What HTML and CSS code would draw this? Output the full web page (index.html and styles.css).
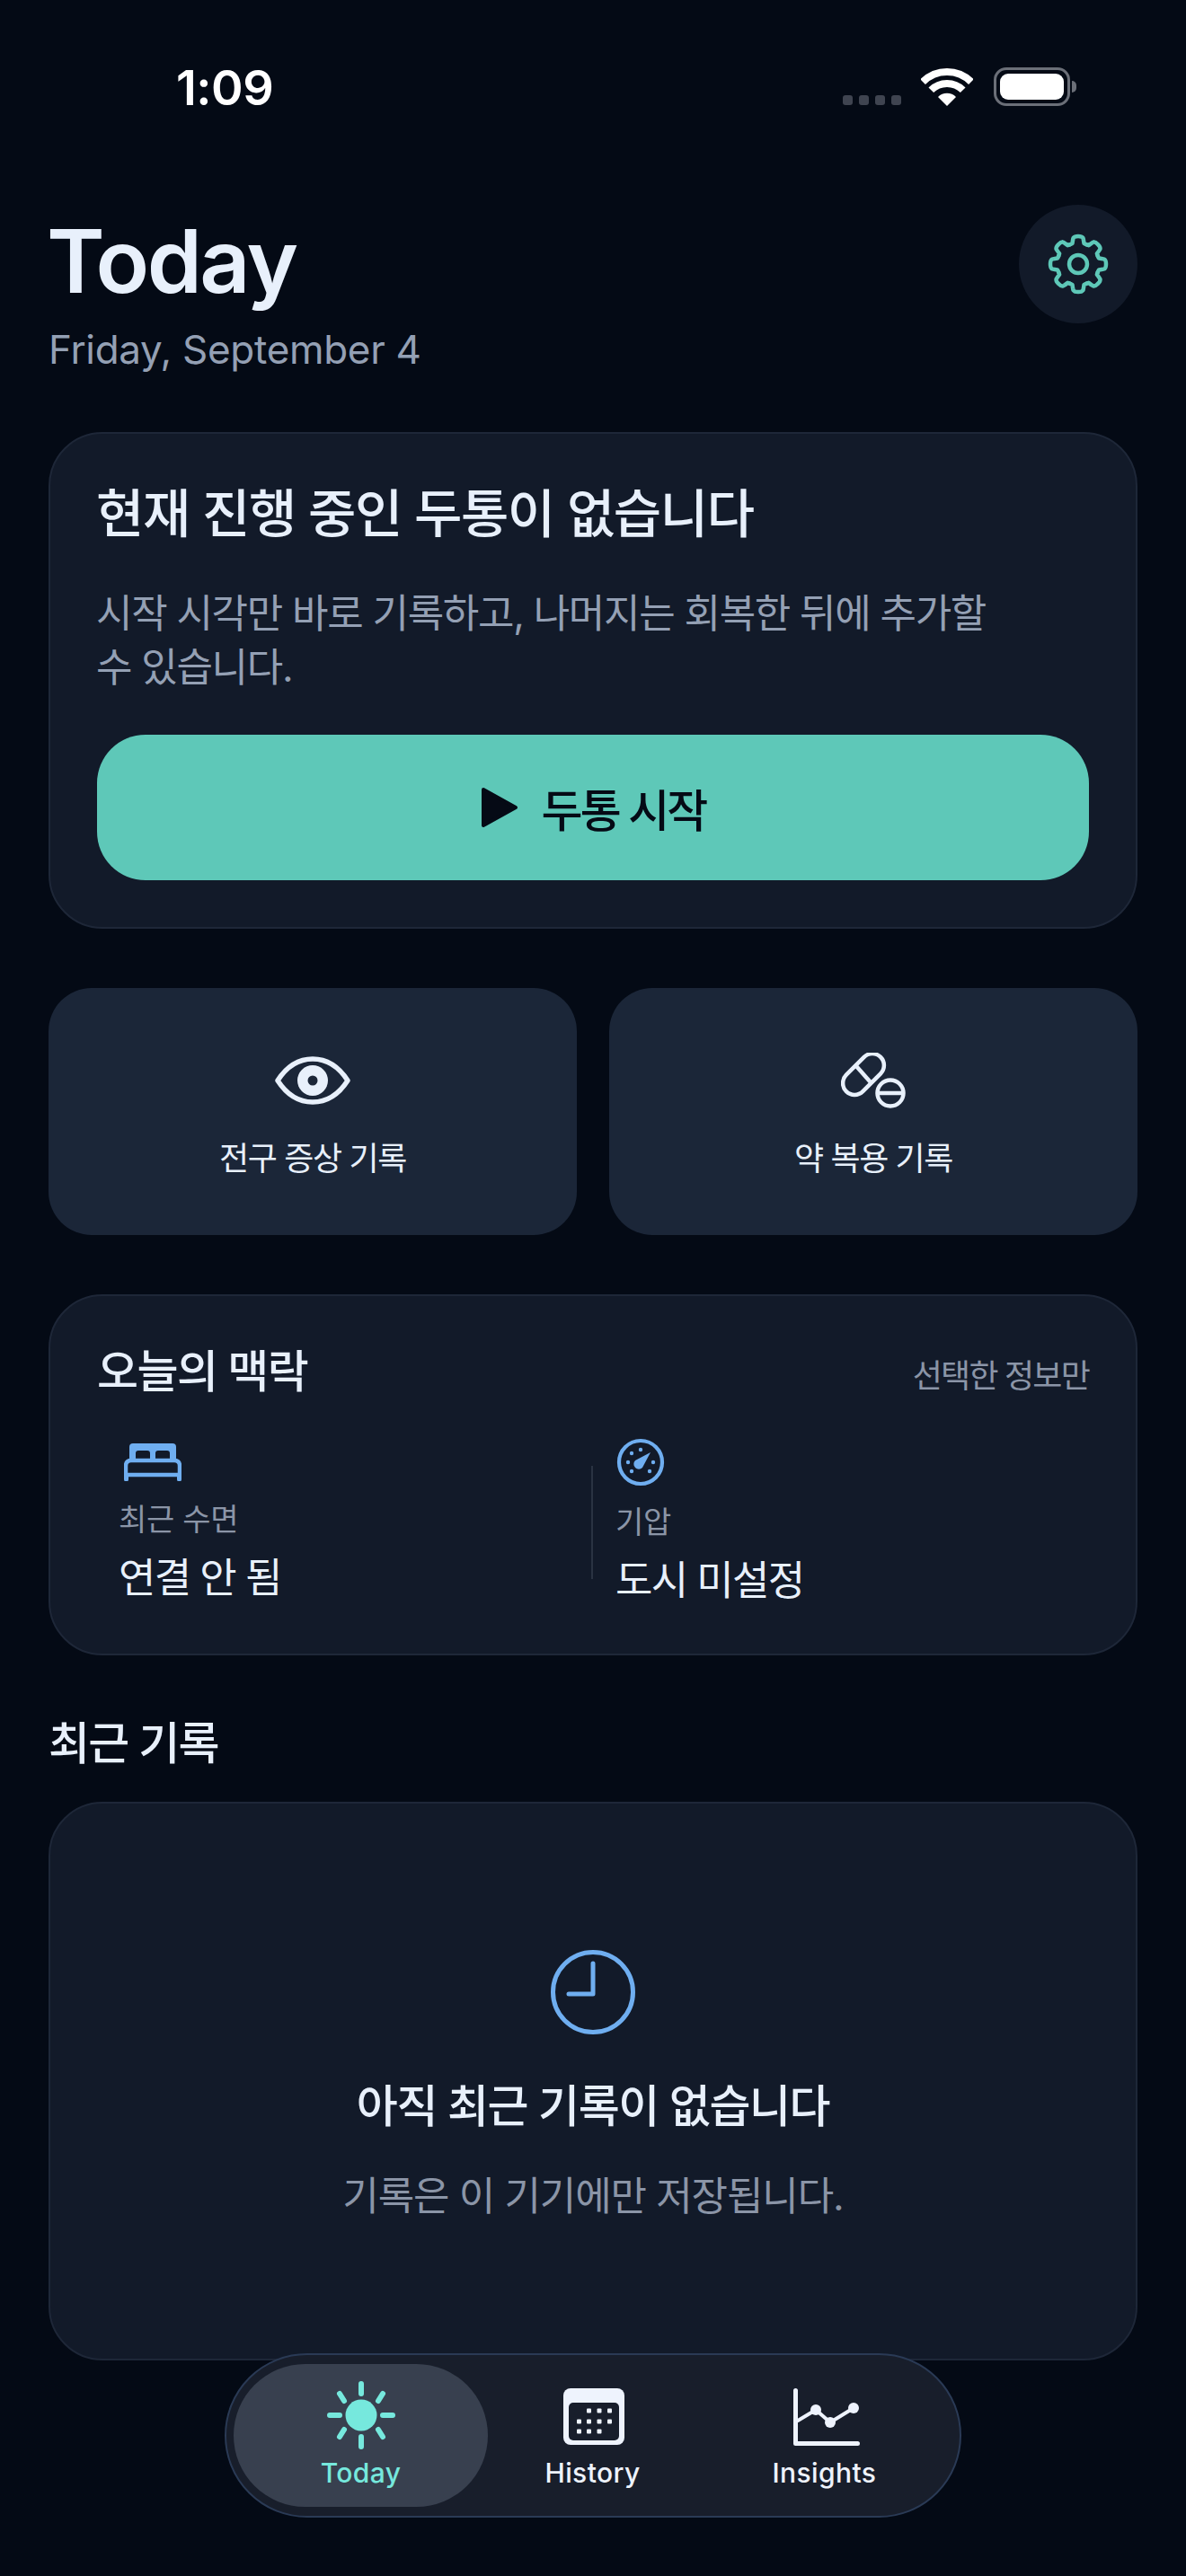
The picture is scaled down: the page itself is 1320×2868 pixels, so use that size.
FILE: index.html
```html
<!DOCTYPE html>
<html lang="ko">
<head>
<meta charset="utf-8">
<title>Today</title>
<link rel="stylesheet" href="styles.css">
</head>
<body>
<div class="screen">
  <div class="statusbar">
    <span class="time">1:09</span>
    <div class="status-icons">
      <div class="signal"><i></i><i></i><i></i><i></i></div>
      <svg class="wifi" viewBox="0 0 58 43"><path d="M2.100 16.100A38 38 0 0 1 55.900 16.100M11.300 25.300A25 25 0 0 1 46.700 25.300" fill="none" stroke="#fff" stroke-width="8"/><path d="M29 43L19 33A14 14 0 0 1 39 33Z" fill="#fff"/></svg>
      <div class="battery"><div class="battery-fill"></div></div>
      <div class="battery-nub"></div>
    </div>
  </div>

  <header class="header">
    <div>
      <h1 class="title">Today</h1>
      <p class="date">Friday, September 4</p>
    </div>
    <button class="gear-btn">
      <svg class="gear" viewBox="-36 -36 72 72" fill="none" stroke="#5EC8B8" stroke-width="4.500" stroke-linecap="round" stroke-linejoin="round">
        <defs><path id="tooth" d="M-9.200-21.700L-6.500-23Q-5.600-30-5-29.500Q-4-31 0-31Q4-31 5-29.500Q5.600-30 6.500-23L9.200-21.700"/></defs>
        <use href="#tooth"/><use href="#tooth" transform="rotate(45)"/><use href="#tooth" transform="rotate(90)"/><use href="#tooth" transform="rotate(135)"/><use href="#tooth" transform="rotate(180)"/><use href="#tooth" transform="rotate(225)"/><use href="#tooth" transform="rotate(270)"/><use href="#tooth" transform="rotate(315)"/>
        <circle r="10"/>
      </svg>
    </button>
  </header>

  <section class="card hero">
    <h2 class="hero-title">현재 진행 중인 두통이 없습니다</h2>
    <p class="hero-text">시작 시각만 바로 기록하고, 나머지는 회복한 뒤에 추가할 수 있습니다.</p>
    <button class="start-btn">
      <svg class="play" viewBox="0 0 42 46"><path d="M3 3L39 23L3 43Z" fill="#050A15" stroke="#050A15" stroke-width="4" stroke-linejoin="round"/></svg>
      <span>두통 시작</span>
    </button>
  </section>

  <div class="quick-row">
    <button class="quick">
      <svg class="quick-icon eye" viewBox="0 0 84 54"><path d="M3 27C14 10 27 3 42 3S70 10 81 27C70 44 57 51 42 51S14 44 3 27Z" fill="none" stroke="#E8F0FB" stroke-width="5.500" stroke-linejoin="round"/><circle cx="42" cy="27" r="17" fill="#E8F0FB"/><circle cx="42" cy="27" r="5.500" fill="#1B2638"/></svg>
      <span>전구 증상 기록</span>
    </button>
    <button class="quick">
      <svg class="quick-icon pill" viewBox="0 0 72 62"><g fill="none" stroke="#E8F0FB" stroke-width="4.500"><rect x="-13" y="-27" width="26" height="54" rx="13" transform="translate(25 24) rotate(45)"/><path d="M18 16L33 33" transform="translate(-0.500 -0.500)"/><circle cx="55" cy="45" r="14.500"/><path d="M41 45H69"/></g></svg>
      <span>약 복용 기록</span>
    </button>
  </div>

  <section class="card context">
    <div class="context-head">
      <h2 class="context-title">오늘의 맥락</h2>
      <span class="context-note">선택한 정보만</span>
    </div>
    <div class="context-grid">
      <div class="context-item">
        <svg class="bed" viewBox="0 0 64 42"><path d="M10 0H54Q58 0 58 4V22H6V4Q6 0 10 0Z" fill="#6FAEF0"/><path d="M13 18V11Q13 8 16 8H26Q29 8 29 11V18ZM35 18V11Q35 8 38 8H48Q51 8 51 11V18Z" fill="#121A29"/><path d="M8 19H56Q62 19 62 25V35H2V25Q2 19 8 19Z" fill="#121A29" stroke="#6FAEF0" stroke-width="4.500" stroke-linejoin="round"/><path d="M2.500 35V40M61.500 35V40" stroke="#6FAEF0" stroke-width="5" stroke-linecap="round"/></svg>
        <span class="context-label">최근 수면</span>
        <span class="context-value">연결 안 됨</span>
      </div>
      <div class="context-item second">
        <svg class="gauge" viewBox="0 0 54 54"><circle cx="27" cy="27" r="24" fill="none" stroke="#6FAEF0" stroke-width="4.200"/><path d="M21 25L38 16L29 33A4.500 4.500 0 0 1 21 25Z" fill="#6FAEF0"/><g fill="#6FAEF0"><circle cx="27" cy="13" r="2.200"/><circle cx="17" cy="17" r="2.200"/><circle cx="13" cy="27" r="2.200"/><circle cx="17" cy="37" r="2.200"/><circle cx="37" cy="37" r="2.200"/><circle cx="41" cy="27" r="2.200"/></g></svg>
        <span class="context-label">기압</span>
        <span class="context-value">도시 미설정</span>
      </div>
    </div>
  </section>

  <h2 class="section-title">최근 기록</h2>

  <section class="card empty">
    <svg class="clock" viewBox="0 0 96 96" fill="none" stroke="#6FAEF0" stroke-width="5"><circle cx="48" cy="48" r="44.500"/><path d="M48 16V50H21" stroke-linecap="round" stroke-linejoin="round"/></svg>
    <h3 class="empty-title">아직 최근 기록이 없습니다</h3>
    <p class="empty-text">기록은 이 기기에만 저장됩니다.</p>
  </section>

  <nav class="tabbar">
    <div class="tab active">
      <svg class="tab-icon" viewBox="0 0 76 76"><circle cx="38" cy="38" r="17.500" fill="#76E8DD"/><g stroke="#76E8DD" stroke-width="6" stroke-linecap="round"><path d="M38 3V14M38 62V73M3 38H14M62 38H73M14 14L19 22M62 14L57 22M14 62L19 54M62 62L57 54"/></g></svg>
      <span>Today</span>
    </div>
    <div class="tab">
      <svg class="tab-icon shifted" viewBox="0 0 70 64"><rect x="1" y="0" width="68" height="63" rx="8" fill="#EEF3FD"/><rect x="7" y="16" width="56" height="42" rx="5" fill="#181E2B"/><g fill="#EEF3FD"><rect x="27" y="22.500" width="5" height="5" rx="1"/><rect x="38.500" y="22.500" width="5" height="5" rx="1"/><rect x="50" y="22.500" width="5" height="5" rx="1"/><rect x="16" y="34.500" width="5" height="5" rx="1"/><rect x="27" y="34.500" width="5" height="5" rx="1"/><rect x="38.500" y="34.500" width="5" height="5" rx="1"/><rect x="50" y="34.500" width="5" height="5" rx="1"/><rect x="16" y="45.500" width="5" height="5" rx="1"/><rect x="27" y="45.500" width="5" height="5" rx="1"/><rect x="38.500" y="45.500" width="5" height="5" rx="1"/></g></svg>
      <span>History</span>
    </div>
    <div class="tab">
      <svg class="tab-icon chart shifted" viewBox="0 0 76 64" fill="none" stroke="#EEF3FD" stroke-linecap="round" stroke-linejoin="round"><path d="M4.500 2.500V61.500H73.500" stroke-width="5"/><path d="M7 36L27 24L43 38L69 22" stroke-width="4"/><g fill="#EEF3FD" stroke="none"><circle cx="27" cy="24" r="6"/><circle cx="43" cy="38" r="6"/><circle cx="69" cy="22" r="6"/></g></svg>
      <span>Insights</span>
    </div>
  </nav>
</div>
</body>
</html>
```

FILE: styles.css
```css
* { box-sizing: border-box; margin: 0; padding: 0; }
html, body { background: #040A15; }
body {
  width: 1320px;
  height: 2868px;
  overflow: hidden;
  font-family: "Inter", "Noto Sans CJK KR", sans-serif;
  color: #E8F0FB;
}
button { font-family: inherit; border: 0; color: inherit; }
.screen { position: relative; width: 1320px; height: 2868px; padding: 0 54px; overflow: hidden; }

.statusbar { display: flex; justify-content: space-between; height: 228px; margin: 0 -54px; padding: 0 122px 0 196px; }
.time { font-size: 54px; font-weight: 600; line-height: 66px; margin-top: 65px; color: #fff; letter-spacing: -0.5px; }
.status-icons { display: flex; align-items: flex-start; margin-top: 75px; }
.signal { display: flex; gap: 7px; margin-top: 31px; }
.signal i { width: 11px; height: 11px; border-radius: 3px; background: #3F4450; }
.wifi { width: 58px; height: 43px; margin-left: 22px; }
.battery { width: 85px; height: 43px; margin-left: 23px; padding: 4px; border: 3px solid #6B6F78; border-radius: 14px; }
.battery-fill { height: 100%; background: #fff; border-radius: 9px; }
.battery-nub { width: 5px; height: 13px; margin: 15px 0 0 2px; background: #6B6F78; border-radius: 0 6px 6px 0; }

.header { display: flex; justify-content: space-between; align-items: flex-start; height: 253px; }
.title { font-size: 98px; font-weight: 600; line-height: 120px; letter-spacing: -2.500px; color: #E8F0FB; margin: 3px 0 0 -2px; }
.date { font-size: 44px; font-weight: 400; line-height: 54px; letter-spacing: -0.300px; color: #94A0B4; margin-top: 11px; }
.gear-btn { width: 132px; height: 132px; border-radius: 50%; background: #121A29; display: flex; align-items: center; justify-content: center; }
.gear { width: 72px; height: 72px; }

.card { background: #121A29; border: 2px solid #1E2738; border-radius: 60px; }
.hero { height: 553px; padding: 50px 52px 0; }
.hero-title { font-size: 58px; font-weight: 500; line-height: 78px; letter-spacing: -1.400px; margin-left: -1px; color: #E8F0FB; }
.hero-text { max-width: 1020px; font-size: 44px; font-weight: 400; line-height: 60px; letter-spacing: -1.300px; color: #94A0B4; margin: 42px 0 0 -1px; }
.start-btn { display: flex; align-items: center; justify-content: center; gap: 26px; width: 100%; height: 162px; margin-top: 45px; background: #5EC8B8; border-radius: 54px; color: #050A15; font-size: 50px; font-weight: 500; letter-spacing: -2.900px; }
.play { width: 42px; height: 46px; }

.quick-row { display: grid; grid-template-columns: 1fr 1fr; gap: 36px; margin-top: 66px; }
.quick { display: flex; flex-direction: column; align-items: center; height: 275px; padding-top: 72px; border-radius: 48px; background: #1B2638; font-size: 36px; font-weight: 400; letter-spacing: -1.400px; color: #E8F0FB; }
.quick-icon { display: block; height: 62px; }
.eye { width: 84px; height: 54px; margin: 4px 0; }
.pill { width: 72px; height: 62px; }
.quick span { margin-top: 31px; line-height: 50px; }

.context { height: 402px; margin-top: 66px; padding: 47px 52px 0; }
.context-head { display: flex; justify-content: space-between; align-items: center; height: 66px; }
.context-title { font-size: 50px; font-weight: 500; letter-spacing: -1.500px; color: #E8F0FB; }
.context-note { font-size: 36px; letter-spacing: -1.800px; color: #8B95A7; margin-top: 12px; }
.context-grid { display: grid; grid-template-columns: 550px 1fr; margin-top: 45px; }
.context-item { display: flex; flex-direction: column; align-items: flex-start; padding-left: 24px; }
.second { position: relative; padding-left: 27px; }
.second::before { content: ""; position: absolute; left: 0; top: 31px; width: 2px; height: 126px; background: #2A3342; }
.bed { width: 64px; height: 42px; margin: 6px 0 0 6px; }
.gauge { width: 54px; height: 54px; margin-left: 1px; }
.context-label { font-size: 34px; line-height: 46px; letter-spacing: -0.300px; color: #8B95A7; margin-top: 20px; }
.second .context-label { margin-top: 17px; }
.context-value { font-size: 45px; font-weight: 400; line-height: 62px; letter-spacing: -1.700px; color: #E8F0FB; margin-top: 11px; }

.section-title { font-size: 50px; font-weight: 500; line-height: 66px; letter-spacing: -1.700px; margin-top: 65px; color: #E8F0FB; }

.empty { height: 622px; margin-top: 32px; display: flex; flex-direction: column; align-items: center; padding-top: 162px; }
.clock { width: 96px; height: 96px; }
.empty-title { font-size: 50px; font-weight: 500; line-height: 66px; letter-spacing: -1.400px; margin-top: 46px; color: #E8F0FB; }
.empty-text { font-size: 44px; line-height: 60px; letter-spacing: -1.100px; margin-top: 37px; color: #8B95A7; }

.tabbar { position: absolute; left: 250px; top: 2620px; width: 820px; height: 183px; padding: 10px 8px; display: grid; grid-template-columns: 283px 233px 283px; background: #181E2B; border: 2px solid #2A3A55; border-radius: 92px; }
.tab { display: flex; flex-direction: column; align-items: center; justify-content: flex-end; padding-bottom: 18px; font-size: 30px; font-weight: 500; line-height: 40px; letter-spacing: 0.400px; color: #EEF3FD; border-radius: 80px; }
.tab.active { background: #38404F; color: #76E8DD; }
.tab-icon { width: 70px; height: 64px; margin-bottom: 10px; }
.tab.active .tab-icon { width: 76px; height: 76px; margin-bottom: 6px; }
.chart { width: 76px; }
.shifted { margin-left: 3px; }
```
